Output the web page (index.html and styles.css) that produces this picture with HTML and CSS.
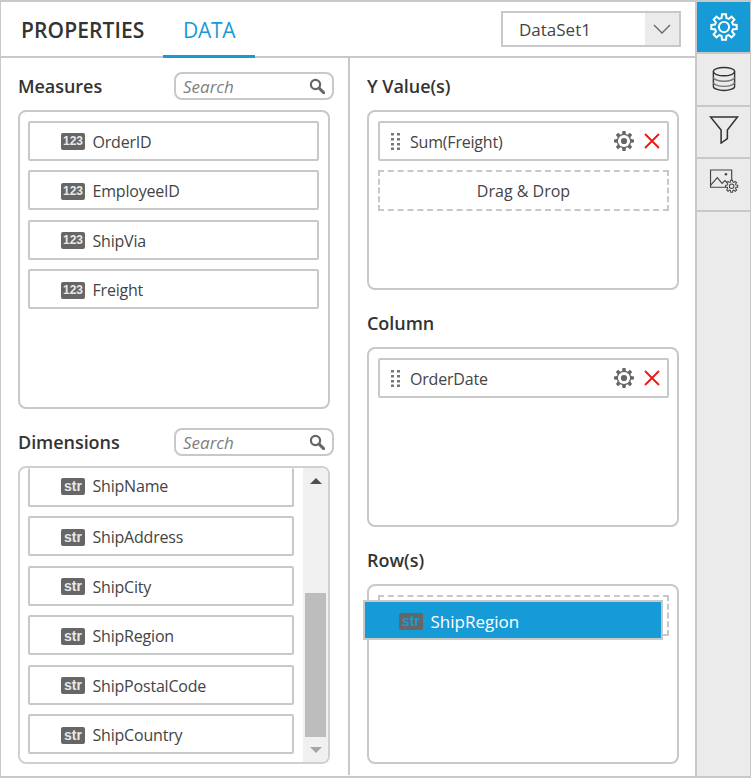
FILE: index.html
```html
<!DOCTYPE html>
<html lang="en">
<head>
  <meta charset="UTF-8">
  <title>Designer data panel</title>
  <link rel="stylesheet" href="styles.css">
</head>
<body>
  <svg class="defs" width="0" height="0">
    <symbol id="gear" viewBox="0 0 24 24" overflow="visible">
      <polygon points="19.73,9.93 22.86,10.28 22.86,13.72 19.73,13.93 18.93,16 20.9,18.47 18.47,20.9 16,18.93 14.07,19.73 13.72,22.86 10.28,22.86 9.93,19.73 8,18.93 5.53,20.9 3.1,18.47 5.07,16 4.27,13.93 1.14,13.72 1.14,10.28 4.27,9.93 5.07,8 3.1,5.53 5.53,3.1 8,5.07 9.93,4.27 10.28,1.14 13.72,1.14 14.07,4.27 16,5.07 18.47,3.1 20.9,5.53 18.93,8"/>
    </symbol>
    <symbol id="search" viewBox="0 0 16 16">
      <circle cx="6.5" cy="6.5" r="4.6" fill="none" stroke="#666" stroke-width="2.2"/>
      <path d="M10 10l4.6 4.6" stroke="#666" stroke-width="3" stroke-linecap="round"/>
    </symbol>
    <symbol id="grip" viewBox="0 0 9 17">
      <path d="M0 0h3v2.500h-3zM6 0h3v2.500h-3zM0 5h3v2.500h-3zM6 5h3v2.500h-3zM0 10h3v2.500h-3zM6 10h3v2.500h-3zM0 14.500h3v2.500h-3zM6 14.500h3v2.500h-3z" fill="#777"/>
    </symbol>
    <symbol id="close" viewBox="0 0 16 16">
      <path d="M1 1l14 14M15 1l-14 14" stroke="#f01414" stroke-width="1.8" fill="none"/>
    </symbol>
  </svg>

  <div class="designer">
    <div class="main">
      <div class="header">
        <div class="tab">PROPERTIES</div>
        <div class="tab tab-active">DATA</div>
        <div class="dataset">
          <div class="dataset-name">DataSet1</div>
          <div class="dataset-btn">
            <svg width="18" height="10" viewBox="0 0 18 10"><path d="M1 1l8 8 8-8" fill="none" stroke="#666" stroke-width="1.3"/></svg>
          </div>
        </div>
      </div>

      <div class="content">
        <div class="pane pane-left">
          <div class="section-head">
            <div class="section-title">Measures</div>
            <div class="search"><span>Search</span><svg class="search-icon"><use href="#search"/></svg></div>
          </div>
          <div class="box box-measures">
            <div class="item"><span class="badge">123</span>OrderID</div>
            <div class="item"><span class="badge">123</span>EmployeeID</div>
            <div class="item"><span class="badge">123</span>ShipVia</div>
            <div class="item"><span class="badge">123</span>Freight</div>
          </div>

          <div class="section-head section-next">
            <div class="section-title">Dimensions</div>
            <div class="search"><span>Search</span><svg class="search-icon"><use href="#search"/></svg></div>
          </div>
          <div class="box box-dimensions">
            <div class="scroll-list">
              <div class="item"><span class="badge badge-str">str</span>ShipName</div>
              <div class="item"><span class="badge badge-str">str</span>ShipAddress</div>
              <div class="item"><span class="badge badge-str">str</span>ShipCity</div>
              <div class="item"><span class="badge badge-str">str</span>ShipRegion</div>
              <div class="item"><span class="badge badge-str">str</span>ShipPostalCode</div>
              <div class="item"><span class="badge badge-str">str</span>ShipCountry</div>
            </div>
            <div class="scrollbar">
              <div class="arrow-cell"><i class="arrow arrow-dark"></i></div>
              <div class="scroll-space"></div>
              <div class="thumb"></div>
              <div class="arrow-cell"><i class="arrow arrow-light"></i></div>
            </div>
          </div>
        </div>

        <div class="pane pane-right">
          <div class="section-head">
            <div class="section-title">Y Value(s)</div>
          </div>
          <div class="box box-axis">
            <div class="item item-axis">
              <svg class="grip"><use href="#grip"/></svg>
              <span class="axis-name">Sum(Freight)</span>
              <svg class="item-gear" viewBox="0 0 24 24"><use href="#gear"/><circle cx="12" cy="12" r="6.6" fill="#fff"/><circle cx="12" cy="12" r="3.4"/></svg>
              <svg class="item-close"><use href="#close"/></svg>
            </div>
            <div class="drop-zone">Drag &amp; Drop</div>
          </div>

          <div class="section-head section-next">
            <div class="section-title">Column</div>
          </div>
          <div class="box box-axis">
            <div class="item item-axis">
              <svg class="grip"><use href="#grip"/></svg>
              <span class="axis-name">OrderDate</span>
              <svg class="item-gear" viewBox="0 0 24 24"><use href="#gear"/><circle cx="12" cy="12" r="6.6" fill="#fff"/><circle cx="12" cy="12" r="3.4"/></svg>
              <svg class="item-close"><use href="#close"/></svg>
            </div>
          </div>

          <div class="section-head section-next">
            <div class="section-title">Row(s)</div>
          </div>
          <div class="box box-axis box-row">
            <div class="drop-zone"></div>
            <div class="drag-item"><span class="badge badge-str badge-drag">str</span>ShipRegion</div>
          </div>
        </div>
      </div>
    </div>

    <div class="sidebar">
      <div class="side-btn side-active">
        <svg width="28" height="28" viewBox="0 0 24 24" class="side-gear"><use href="#gear"/><circle cx="12" cy="12" r="4.4"/></svg>
      </div>
      <div class="side-btn">
        <svg width="24" height="26" viewBox="0 0 26 28" fill="none" stroke="#333" stroke-width="1.500">
          <ellipse cx="13" cy="6" rx="11.500" ry="4.500"/>
          <path d="M1.500 6v16c0 2.200 5 4.500 11.500 4.500s11.500-2.300 11.500-4.500V6"/>
          <path d="M1.500 12c0 2.200 5 4.500 11.500 4.500s11.500-2.300 11.500-4.500M1.500 17.500c0 2.200 5 4.500 11.500 4.500s11.500-2.300 11.500-4.500" stroke="#777"/>
        </svg>
      </div>
      <div class="side-btn">
        <svg class="side-funnel" width="30" height="28" viewBox="0 0 30 29" fill="none" stroke="#333" stroke-width="1.600">
          <path d="M1 1h28L18.500 14.500v9L12 28V14.500z"/>
        </svg>
      </div>
      <div class="side-btn">
        <svg class="side-image" width="30" height="25" viewBox="0 0 30 26" fill="none" stroke="#444" stroke-width="1.200">
          <path d="M20 19H1V1h22v12"/>
          <path d="M1 17l7-8 5 6 3-3 3 3"/>
          <circle cx="17" cy="5.500" r="1.300" fill="#444" stroke="none"/>
          <g transform="translate(16 11) scale(.58)" stroke-width="1.800"><use href="#gear" width="24" height="24" fill="#ebebeb"/><circle cx="12" cy="12" r="4"/></g>
        </svg>
      </div>
    </div>
  </div>
</body>
</html>
```

FILE: styles.css
```css
body {
  margin: 0;
  font-family: "Open Sans", "Noto Sans", Arial, sans-serif;
  color: #333;
}
.defs {
  position: absolute;
}
.designer {
  display: flex;
  box-sizing: border-box;
  width: 751px;
  height: 778px;
  border: 1px solid #c8c8c8;
  border-top-width: 2px;
  border-bottom-width: 2px;
}
.main {
  display: flex;
  flex-direction: column;
  width: 694px;
}

/* tabs and dataset picker */
.header {
  display: flex;
  box-sizing: border-box;
  height: 56px;
  border-bottom: 2px solid #c8c8c8;
}
.tab {
  box-sizing: border-box;
  width: 162px;
  height: 56px;
  padding: 13px 0 0 20px;
  font-size: 21px;
  line-height: 30px;
  font-weight: 550;
  letter-spacing: 0.1px;
  white-space: nowrap;
}
.tab-active {
  width: 92px;
  font-weight: 500;
  letter-spacing: -0.25px;
  color: #179bd7;
  border-bottom: 3px solid #179bd7;
}
.dataset {
  display: flex;
  box-sizing: border-box;
  width: 180px;
  height: 36px;
  margin: 9px 14px 0 auto;
  border: 2px solid #c8c8c8;
}
.dataset-name {
  flex: 1;
  padding: 1px 0 0 16px;
  font-size: 17px;
  line-height: 32px;
  color: #444;
}
.dataset-btn {
  display: flex;
  align-items: center;
  justify-content: center;
  width: 34px;
  background-color: #ebebeb;
  border-left: 1px solid #fff;
}

.content {
  display: flex;
  flex: 1;
}
.pane {
  box-sizing: border-box;
  padding: 14px 0 0 17px;
}
.pane-left {
  width: 347px;
}
.pane-right {
  flex: 1;
  height: 717px;
  border-left: 2px solid #c8c8c8;
}

.section-head {
  display: flex;
  justify-content: space-between;
  width: 316px;
  height: 28px;
  margin-bottom: 10px;
}
.section-next {
  margin-top: 19px;
}
.section-title {
  font-size: 18px;
  line-height: 28px;
  font-weight: 550;
  letter-spacing: -0.05px;
}
.search {
  display: flex;
  align-items: center;
  justify-content: space-between;
  box-sizing: border-box;
  width: 160px;
  padding: 0 7px 0 7px;
  border: 2px solid #c8c8c8;
  border-radius: 8px;
  font-size: 17px;
  font-style: italic;
  color: #808080;
}
.search-icon {
  width: 16px;
  height: 16px;
}

/* boxes and field rows */
.box {
  box-sizing: border-box;
  width: 312px;
  border: 2px solid #c8c8c8;
  border-radius: 8px;
}
.box-measures {
  display: flex;
  flex-direction: column;
  gap: 9.5px;
  height: 299px;
  padding: 8.5px 9px 0 8px;
}
.box-dimensions {
  display: flex;
  height: 298px;
  overflow: hidden;
  border-color: #d0d0d0;
}
.box-axis {
  position: relative;
  display: flex;
  flex-direction: column;
  gap: 9px;
  height: 180px;
  padding: 9px 8px 9px 9px;
}
.scroll-list {
  display: flex;
  flex: 1;
  flex-direction: column;
  gap: 9.5px;
  padding-left: 8px;
}
.scroll-list .item {
  width: 266px;
}
/* first row is scrolled partly out of view */
.scroll-list .item:first-child {
  height: 38.5px;
  padding-top: 0;
  border-top: 0;
}
.item {
  display: flex;
  flex: none;
  align-items: center;
  box-sizing: border-box;
  height: 40px;
  padding: 2px 0 0 31px;
  border: 2px solid #c8c8c8;
  border-radius: 2px;
  font-size: 16px;
  letter-spacing: -0.2px;
  color: #444;
}
.badge {
  flex: none;
  width: 24px;
  height: 17px;
  margin-right: 7.5px;
  background-color: #666;
  border-radius: 2px;
  font-family: "Liberation Sans", Arial, sans-serif;
  font-size: 12px;
  font-weight: bold;
  line-height: 17px;
  letter-spacing: 0;
  text-align: center;
  color: #e8e8e8;
}
.badge-str {
  font-size: 14px;
  line-height: 16px;
}
.item-axis {
  padding: 0 7px 0 11px;
}
.grip {
  flex: none;
  width: 9px;
  height: 17px;
}
.axis-name {
  flex: 1;
  padding-top: 2px;
  margin-left: 10px;
}
.item-gear {
  width: 22px;
  height: 22px;
  margin-right: 9px;
  fill: #666;
}
.item-close {
  width: 16px;
  height: 16px;
}
.drop-zone {
  flex: none;
  box-sizing: border-box;
  height: 41px;
  border: 2px dashed #c8c8c8;
  font-size: 16px;
  line-height: 39px;
  text-align: center;
  color: #444;
}

/* item being dragged, floats over the Row(s) box */
.drag-item {
  position: absolute;
  top: 14px;
  left: -6px;
  display: flex;
  align-items: center;
  box-sizing: border-box;
  width: 300px;
  height: 40px;
  padding: 2px 0 0 34px;
  background-color: #179bd7;
  border: 2px solid #c8c8c8;
  font-size: 17px;
  color: #fff;
}
.badge-drag {
  color: #179bd7;
}

.scrollbar {
  display: flex;
  flex: none;
  flex-direction: column;
  width: 25px;
  background-color: #f0f0f0;
}
.arrow-cell {
  display: flex;
  align-items: center;
  justify-content: center;
  flex: none;
  height: 25px;
}
.arrow {
  width: 0;
  height: 0;
  border-left: 6px solid transparent;
  border-right: 6px solid transparent;
}
.arrow-dark {
  border-bottom: 6px solid #505050;
}
.arrow-light {
  border-top: 6px solid #a6a6a6;
}
.scroll-space {
  flex: 1;
}
.thumb {
  flex: none;
  width: 21px;
  height: 144px;
  margin-left: 2px;
  background-color: #bdbdbd;
}

/* right icon strip */
.sidebar {
  display: flex;
  flex-direction: column;
  flex: 1;
  background-color: #ebebeb;
  border-left: 2px solid #c8c8c8;
}
.side-btn {
  display: flex;
  align-items: center;
  justify-content: center;
  flex: none;
  height: 50.5px;
  border-bottom: 2px solid #c8c8c8;
}
.side-active {
  height: 50px;
  background-color: #179bd7;
}
.side-funnel {
  margin-bottom: 4px;
}
.side-image {
  margin-bottom: 6px;
}
.side-gear {
  fill: none;
  stroke: #fff;
  stroke-width: 1.7;
}
```
